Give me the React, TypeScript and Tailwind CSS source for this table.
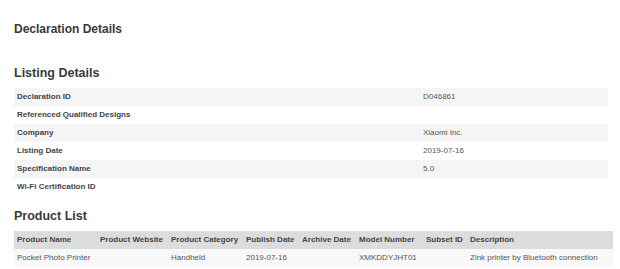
import React from 'react';

const listing: [string, string][] = [
  ['Declaration ID', 'D046861'],
  ['Referenced Qualified Designs', ''],
  ['Company', 'Xiaomi Inc.'],
  ['Listing Date', '2019-07-16'],
  ['Specification Name', '5.0'],
  ['Wi-Fi Certification ID', ''],
];

const columns = [
  { label: 'Product Name', w: 'w-[83px]' },
  { label: 'Product Website', w: 'w-[71px]' },
  { label: 'Product Category', w: 'w-[75px]' },
  { label: 'Publish Date', w: 'w-[56px]' },
  { label: 'Archive Date', w: 'w-[57px]' },
  { label: 'Model Number', w: 'w-[67px]' },
  { label: 'Subset ID', w: 'w-[44px]' },
  { label: 'Description', w: 'flex-1' },
];

const product = ['Pocket Photo Printer', '', 'Handheld', '2019-07-16', '', 'XMKDDYJHT01', '', 'Zink printer by Bluetooth connection'];

export default function App() {
  return (
    <div className="w-[620px] h-[269px] bg-white text-[#333] font-['Liberation_Sans',Arial,sans-serif] pl-[14px] pr-[7px] pt-[22px] overflow-hidden">
      <h1 className="text-[12px] font-bold leading-[14px] text-[#3a3a3a]">Declaration Details</h1>

      <h2 className="mt-[29px] text-[12.5px] font-bold leading-[16px] text-[#3a3a3a]">Listing Details</h2>
      <div className="mt-[7px] w-[594px] text-[8px] leading-[18px] text-[#444]">
        {listing.map(([label, value], i) => (
          <div key={label} className={`flex h-[18px] ${i % 2 === 0 ? 'bg-[#f5f5f5]' : ''}`}>
            <div className="w-[409px] pl-[3px] font-bold">{label}</div>
            <div className="flex-1 text-[#555]">{value}</div>
          </div>
        ))}
      </div>

      <h2 className="mt-[12px] text-[12.5px] font-bold leading-[16px] text-[#3a3a3a]">Product List</h2>
      <div className="mt-[7px] w-[599px] text-[8px] leading-[18px] text-[#444]">
        <div className="flex h-[18px] bg-[#dcdcdc] font-bold">
          {columns.map(c => (
            <div key={c.label} className={`${c.w} pl-[3px] whitespace-nowrap`}>{c.label}</div>
          ))}
        </div>
        <div className="flex h-[18px] bg-[#f8f8f8] text-[#555]">
          {columns.map((c, i) => (
            <div key={c.label} className={`${c.w} pl-[3px] whitespace-nowrap`}>{product[i]}</div>
          ))}
        </div>
      </div>
    </div>
  );
}
